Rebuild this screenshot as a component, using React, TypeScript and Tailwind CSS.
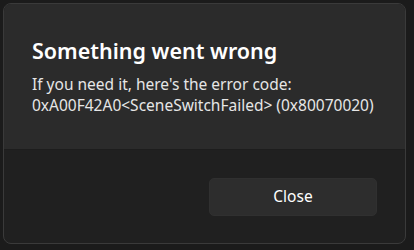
import React from "react";

export default function App() {
  return (
    <div className="w-[414px] h-[250px] bg-[#1b1b1b] pt-[3px] pl-[3px]" style={{ fontFamily: '"Noto Sans", "Open Sans", sans-serif' }}>
      <div className="w-[403px] h-[241px] rounded-[8px] border border-[#3a3a3a] overflow-hidden flex flex-col bg-[#202020]">
        <div className="h-[146px] bg-[#2b2b2b] border-b border-[#1d1d1d] pl-[28px] pt-[32px]">
          <div className="text-[21.5px] leading-[29px] font-semibold text-white">Something went wrong</div>
          <div className="mt-[9px] text-[15.5px] leading-[21px] text-[#e6e6e6]">
            <div>If you need it, here's the error code:</div>
            <div>0xA00F42A0&lt;SceneSwitchFailed&gt; (0x80070020)</div>
          </div>
        </div>
        <div className="flex-1 flex justify-end items-start pt-[28px] pr-[28px]">
          <button className="w-[168px] h-[38px] rounded-[5px] bg-[#2d2d2d] border border-[#303030] text-[15.5px] text-white">Close</button>
        </div>
      </div>
    </div>
  );
}
